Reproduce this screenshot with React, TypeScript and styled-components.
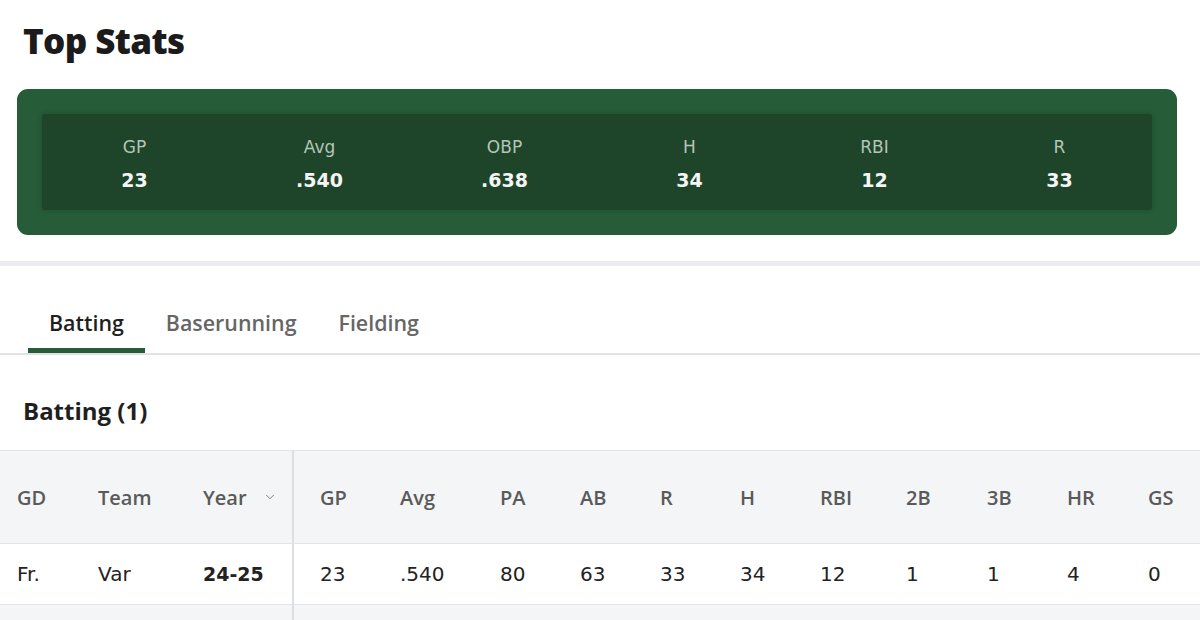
import React from 'react';
import styled, { createGlobalStyle } from 'styled-components';
import { ChevronDown } from 'lucide-react';

const GlobalStyle = createGlobalStyle`
  body {
    margin: 0;
    background: #ffffff;
    font-family: "Open Sans", "DejaVu Sans", sans-serif;
    color: #1f1f1f;
  }
`;

const Page = styled.div`
  width: 1200px;
  overflow: hidden;
`;

const Title = styled.h1`
  margin: 21px 0 0 23px;
  font-size: 35px;
  line-height: 40px;
  font-weight: 800;
  letter-spacing: -0.6px;
  color: #1b1b1b;
`;

const StatsCard = styled.div`
  margin: 28px 23px 0 17px;
  padding: 25px;
  background: #265c37;
  border-radius: 11px;
`;

const StatsInner = styled.div`
  height: 96px;
  box-sizing: border-box;
  padding-top: 3px;
  display: grid;
  grid-template-columns: repeat(6, 1fr);
  align-items: center;
  background: #1e452a;
  border-radius: 3px;
  box-shadow: 0 0 5px rgba(0, 0, 0, 0.18);
`;

const Stat = styled.div`
  display: flex;
  flex-direction: column;
  align-items: center;
  gap: 10px;
  font-family: "DejaVu Sans", sans-serif;
`;

const StatLabel = styled.span`
  font-size: 17px;
  line-height: 22px;
  color: #b4c6b8;
`;

const StatValue = styled.span`
  font-size: 19px;
  line-height: 24px;
  font-weight: 700;
  color: #f5f5f5;
`;

const Band = styled.div`
  margin-top: 26px;
  height: 5px;
  background: #ececf0;
`;

const TabBar = styled.div`
  display: flex;
  padding: 30px 0 0 28px;
  border-bottom: 2px solid #e2e2e5;
`;

const Tab = styled.div<{ $active?: boolean }>`
  height: 57px;
  box-sizing: border-box;
  display: flex;
  align-items: center;
  padding: 0 21px;
  border-bottom: 5px solid ${p => (p.$active ? '#265c37' : 'transparent')};
  font-size: 21.4px;
  font-weight: 600;
  color: ${p => (p.$active ? '#1f1f1f' : '#666666')};
`;

const SectionTitle = styled.h2`
  margin: 40px 0 23px 23px;
  font-size: 24px;
  line-height: 32px;
  font-weight: 700;
  color: #1f1f1f;
`;

const Table = styled.div`
  border-top: 1px solid #e2e3e7;
`;

const Row = styled.div<{ $shade?: boolean; $height: number }>`
  display: grid;
  grid-template-columns: 98px 105px 91px 80px 100px 80px 80px 80px 80px 86px 81px 80px 81px 1fr;
  height: ${p => p.$height}px;
  background: ${p => (p.$shade ? '#f4f5f7' : '#ffffff')};
  border-bottom: 1px solid #e2e3e7;
`;

const Cell = styled.div<{ $head?: boolean; $lead?: boolean; $plain?: boolean; $divider?: boolean; $bold?: boolean }>`
  display: flex;
  align-items: center;
  padding-left: ${p => (p.$lead ? '17px' : p.$plain || p.$divider ? '0' : '26px')};
  box-sizing: border-box;
  border-right: ${p => (p.$divider ? '2px solid #dddee2' : 'none')};
  font-family: ${p => (p.$head ? '"Open Sans", sans-serif' : '"DejaVu Sans", sans-serif')};
  font-size: ${p => (p.$bold ? '19px' : '20px')};
  font-weight: ${p => (p.$head ? 600 : p.$bold ? 700 : 400)};
  color: ${p => (p.$head ? '#5a5a5a' : '#222222')};
  white-space: nowrap;
`;

const SortIcon = styled(ChevronDown)`
  margin-left: 16px;
  color: #6b6b6b;
`;

const topStats = [
  { label: 'GP', value: '23' },
  { label: 'Avg', value: '.540' },
  { label: 'OBP', value: '.638' },
  { label: 'H', value: '34' },
  { label: 'RBI', value: '12' },
  { label: 'R', value: '33' },
];

const statCols = ['GP', 'Avg', 'PA', 'AB', 'R', 'H', 'RBI', '2B', '3B', 'HR', 'GS'];
const season = ['23', '.540', '80', '63', '33', '34', '12', '1', '1', '4', '0'];

export default function App() {
  return (
    <Page>
      <GlobalStyle />
      <Title>Top Stats</Title>
      <StatsCard>
        <StatsInner>
          {topStats.map(s => (
            <Stat key={s.label}>
              <StatLabel>{s.label}</StatLabel>
              <StatValue>{s.value}</StatValue>
            </Stat>
          ))}
        </StatsInner>
      </StatsCard>
      <Band />
      <TabBar>
        <Tab $active>Batting</Tab>
        <Tab>Baserunning</Tab>
        <Tab>Fielding</Tab>
      </TabBar>
      <SectionTitle>Batting (1)</SectionTitle>
      <Table>
        <Row $shade $height={92}>
          <Cell $head $lead>GD</Cell>
          <Cell $head $plain>Team</Cell>
          <Cell $head $divider>
            Year
            <SortIcon size={14} strokeWidth={1.5} />
          </Cell>
          {statCols.map(c => (
            <Cell $head key={c}>{c}</Cell>
          ))}
        </Row>
        <Row $height={60}>
          <Cell $lead>Fr.</Cell>
          <Cell $plain>Var</Cell>
          <Cell $divider $bold>24-25</Cell>
          {season.map((v, i) => (
            <Cell key={statCols[i]}>{v}</Cell>
          ))}
        </Row>
        <Row $shade $height={60}>
          <Cell $lead />
          <Cell $plain />
          <Cell $divider />
        </Row>
      </Table>
    </Page>
  );
}
